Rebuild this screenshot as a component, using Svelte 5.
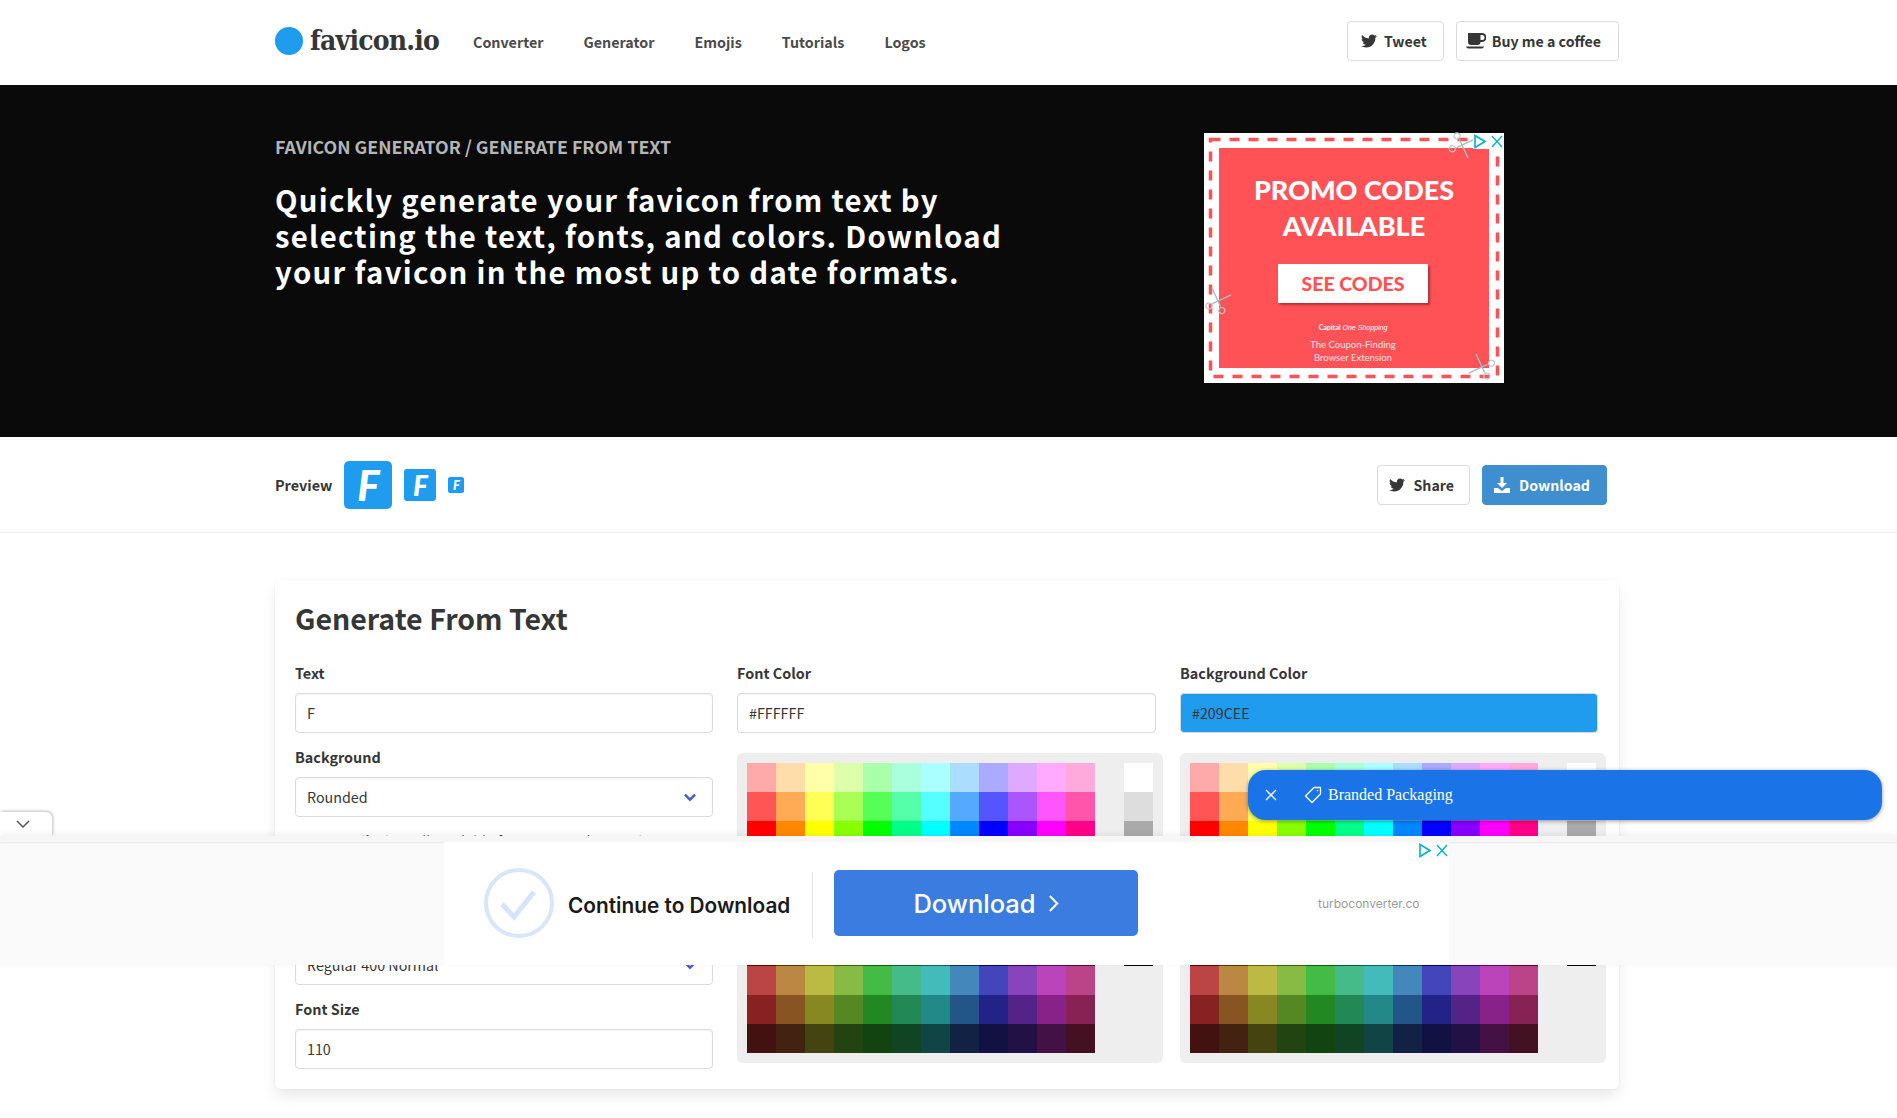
<script>
	const navLinks = ['Converter', 'Generator', 'Emojis', 'Tutorials', 'Logos'];

	const hues = [
		['h', 'l', 'l'], ['h', 'm', 'l'], ['h', 'h', 'l'], ['m', 'h', 'l'],
		['l', 'h', 'l'], ['l', 'h', 'm'], ['l', 'h', 'h'], ['l', 'm', 'h'],
		['l', 'l', 'h'], ['m', 'l', 'h'], ['h', 'l', 'h'], ['h', 'l', 'm']
	];
	const shades = [
		{ h: 'ff', m: 'dd', l: 'aa' },
		{ h: 'ff', m: 'aa', l: '55' },
		{ h: 'ff', m: '88', l: '00' },
		{ h: 'cc', m: '66', l: '00' },
		{ h: 'cc', m: '88', l: '44' },
		{ h: '99', m: '44', l: '00' },
		{ h: '66', m: '33', l: '00' },
		{ h: 'bb', m: '88', l: '44' },
		{ h: '88', m: '55', l: '22' },
		{ h: '44', m: '22', l: '11' }
	];
	const swatches = shades.flatMap((s) =>
		hues.map((c) => '#' + s[c[0]] + s[c[1]] + s[c[2]])
	);
	const grays = ['#ffffff', '#dddddd', '#aaaaaa', '#888888', '#666666', '#333333', '#000000'];
	const pickers = ['font', 'background'];
</script>

{#snippet twitter()}
	<svg class="ico" viewBox="0 0 512 512"><path fill="currentColor" d="M459 152c.3 4.500.3 9.100.3 13.600 0 138.700-105.600 298.600-298.600 298.600-59.500 0-114.700-17.200-161.100-47.100 8.400 1 16.600 1.300 25.300 1.300 49.100 0 94.200-16.600 130.300-44.800-46.100-1-84.800-31.200-98.100-72.800 6.500 1 13 1.600 19.800 1.600 9.400 0 18.800-1.300 27.600-3.600-48.100-9.700-84.100-52-84.100-103v-1.300c14 7.800 30.200 12.700 47.400 13.300-28.300-18.800-46.800-51-46.800-87.400 0-19.500 5.200-37.400 14.300-53 51.700 63.700 129.300 105.300 216.400 109.800-1.600-7.800-2.600-15.900-2.600-24 0-57.800 46.800-104.900 104.900-104.900 30.200 0 57.500 12.700 76.700 33.100 23.700-4.500 46.500-13.300 66.600-25.300-7.800 24-24.400 44.200-46.100 57.200 21.100-2.300 41.600-8.100 60.400-16.200-14.300 20.800-32.200 39.300-52.600 54.300z"/></svg>
{/snippet}

{#snippet adChoice()}
	<svg class="adchoice" viewBox="0 0 30 15">
		<path d="M2 1.500v12l10-6z" fill="none" stroke="#00aecd" stroke-width="1.600"/>
		<path d="M19 2l10 11M29 2L19 13" fill="none" stroke="#00aecd" stroke-width="1.300"/>
	</svg>
{/snippet}

{#snippet scissors(cls)}
	<svg class="scissors {cls}" viewBox="0 0 28 28">
		<path d="M2 2l17 17M26 2L9 19" stroke="#a9b9c4" stroke-width="1.600" fill="none"/>
		<circle cx="6" cy="23" r="3.500" fill="none" stroke="#b9c7d0" stroke-width="1.400"/>
		<circle cx="22" cy="23" r="3.500" fill="none" stroke="#b9c7d0" stroke-width="1.400"/>
	</svg>
{/snippet}

{#snippet field(label, value, fill)}
	<div class="field">
		<span class="label">{label}</span>
		<div class="input" class:filled={fill}>{value}</div>
	</div>
{/snippet}

{#snippet select(label, value)}
	<div class="field">
		<span class="label">{label}</span>
		<div class="input">
			{value}
			<svg class="caret" viewBox="0 0 12 8"><path d="M1.500 1.500L6 6l4.500-4.500" fill="none" stroke="#485fc7" stroke-width="2.200"/></svg>
		</div>
	</div>
{/snippet}

<header class="nav">
	<div class="container nav-row">
		<div class="logo"><span class="dot"></span><span class="wordmark">favicon.io</span></div>
		<nav>
			{#each navLinks as link}
				<span class="nav-link">{link}</span>
			{/each}
		</nav>
		<div class="nav-actions">
			<span class="btn tweet">{@render twitter()}Tweet</span>
			<span class="btn coffee">
				<svg class="ico cup" viewBox="0 0 20 16"><path fill="currentColor" d="M2 0h14a4 4 0 0 1 0 9h-1.500a3 3 0 0 1-3 3H5a3 3 0 0 1-3-3zM14.500 2v5H16a2.500 2.500 0 0 0 0-5zM0 13.500h18c-.5 1.500-1.500 2-3 2H3c-1.500 0-2.500-.5-3-2z"/></svg>
				Buy me a coffee
			</span>
		</div>
	</div>
</header>

<section class="hero">
	<div class="container hero-row">
		<div class="hero-copy">
			<p class="crumb">FAVICON GENERATOR / GENERATE FROM TEXT</p>
			<h1>Quickly generate your favicon from text by selecting the text, fonts, and colors. Download your favicon in the most up to date formats.</h1>
		</div>
		<aside class="promo">
			<svg class="promo-dash" viewBox="0 0 300 250">
				<rect x="6.500" y="6.500" width="287" height="237" fill="none" stroke="#ff5257" stroke-width="3.500" stroke-dasharray="10 9"/>
			</svg>
			<div class="promo-red">
				<div class="promo-title">PROMO CODES<br />AVAILABLE</div>
				<div class="promo-btn">SEE CODES</div>
				<div class="promo-brand"><b>Capital</b><i>One Shopping</i></div>
				<div class="promo-sub">The Coupon-Finding<br />Browser Extension</div>
			</div>
			{@render scissors('s-top')}
			{@render scissors('s-left')}
			{@render scissors('s-bottom')}
			{@render adChoice()}
		</aside>
	</div>
</section>

<section class="preview">
	<div class="container preview-row">
		<span class="preview-label">Preview</span>
		<span class="fav fav-48">F</span>
		<span class="fav fav-32">F</span>
		<span class="fav fav-16">F</span>
		<div class="preview-actions">
			<span class="btn share">{@render twitter()}Share</span>
			<span class="btn primary">
				<svg class="ico" viewBox="0 0 16 16"><path fill="currentColor" d="M6.500 0h3v6H13L8 11 3 6h3.500zM0 11h4l4 3 4-3h4v5H0z"/></svg>
				Download
			</span>
		</div>
	</div>
</section>

<main class="container">
	<div class="card">
		<h2>Generate From Text</h2>
		<div class="columns">
			<div class="col">
				{@render field('Text', 'F')}
				{@render select('Background', 'Rounded')}
				<div class="field">
					<span class="label">Font Family <em>(see all available fonts at Google Fonts)</em></span>
					<div class="input">
						Leckerli One
						<svg class="caret" viewBox="0 0 12 8"><path d="M1.500 1.500L6 6l4.500-4.500" fill="none" stroke="#485fc7" stroke-width="2.200"/></svg>
					</div>
				</div>
				{@render select('Font Variant', 'Regular 400 Normal')}
				{@render field('Font Size', '110')}
			</div>
			{#each pickers as picker}
				<div class="col">
					{#if picker === 'font'}
						{@render field('Font Color', '#FFFFFF')}
					{:else}
						{@render field('Background Color', '#209CEE', true)}
					{/if}
					<div class="picker">
						<div class="swatches">
							{#each swatches as color}
								<span style="background: {color}"></span>
							{/each}
						</div>
						<div class="grays">
							{#each grays as color}
								<span style="background: {color}"></span>
							{/each}
						</div>
					</div>
				</div>
			{/each}
		</div>
	</div>
</main>

<div class="pill">
	<svg class="pill-x" viewBox="0 0 12 12"><path d="M1 1l10 10M11 1L1 11" stroke="#fff" stroke-width="1.300" fill="none"/></svg>
	<svg class="pill-tag" viewBox="0 0 18 18"><path d="M10 1.500h6.500V8L8 16.500 1.500 10z" fill="none" stroke="#fff" stroke-width="1.300" stroke-linejoin="round"/><circle cx="13.500" cy="4.500" r=".8" fill="#fff"/></svg>
	<span>Branded Packaging</span>
</div>

<div class="tab">
	<svg viewBox="0 0 14 9"><path d="M1 1l6 6 6-6" fill="none" stroke="#555" stroke-width="1.500"/></svg>
</div>

<div class="bar">
	<div class="bar-ad">
		<svg class="check" viewBox="0 0 70 70">
			<circle cx="35" cy="35" r="33" fill="#fff" stroke="#d9e6f9" stroke-width="4"/>
			<path d="M18 36l12 13 20-25" fill="none" stroke="#d5e4fa" stroke-width="5"/>
		</svg>
		<span class="continue">Continue to Download</span>
		<span class="divider"></span>
		<span class="dl">Download <svg viewBox="0 0 10 18"><path d="M1.500 2l7 7-7 7" fill="none" stroke="#fff" stroke-width="2"/></svg></span>
		<span class="turbo">turboconverter.co</span>
		{@render adChoice()}
	</div>
</div>

<style>
	:global(body) {
		margin: 0;
		background: #fff;
		color: #363636;
		font-family: 'Noto Sans CJK SC', 'Open Sans', sans-serif;
	}

	.container {
		width: 1344px;
		margin-left: 275px;
		box-sizing: border-box;
	}

	main.container {
		padding-bottom: 29px;
	}

	.nav {
		height: 85px;
	}

	.nav-row {
		display: flex;
		align-items: center;
		height: 100%;
		padding-bottom: 3px;
	}

	.logo {
		display: flex;
		align-items: center;
		gap: 7px;
		width: 198px;
	}

	.dot {
		width: 28px;
		height: 28px;
		border-radius: 50%;
		background: #209cee;
	}

	.wordmark {
		font-family: 'DejaVu Serif Condensed', 'DejaVu Serif', serif;
		font-size: 28px;
		line-height: 36px;
		font-weight: 700;
		letter-spacing: -0.800px;
		color: #363636;
	}

	nav {
		display: flex;
		gap: 40px;
	}

	.nav-link {
		font-size: 14.300px;
		font-weight: 700;
		color: #4a4a4a;
	}

	.nav-actions {
		margin-left: auto;
		display: flex;
		gap: 12px;
	}

	.btn {
		display: inline-flex;
		align-items: center;
		height: 40px;
		box-sizing: border-box;
		border: 1px solid #dbdbdb;
		border-radius: 4px;
		font-size: 14.200px;
		font-weight: 700;
		color: #363636;
		background: #fff;
	}

	.tweet {
		gap: 7px;
		padding: 0 16px 0 13px;
	}

	.share {
		gap: 9px;
		padding: 0 15px 0 11px;
	}

	.coffee {
		gap: 6px;
		padding: 0 17px 0 9px;
	}

	.primary {
		gap: 9px;
		padding: 0 16px 0 11px;
		background: #3e8ed0;
		border-color: #3e8ed0;
		color: #fff;
	}

	.ico {
		width: 16px;
		height: 16px;
	}

	.cup {
		width: 20px;
	}

	.hero {
		height: 352px;
		background: #0a0a0a;
	}

	.hero-row {
		display: flex;
		padding-top: 48px;
	}

	.hero-copy {
		width: 929px;
	}

	.crumb {
		margin: 0;
		font-size: 17.800px;
		line-height: 26px;
		font-weight: 700;
		color: #b5b5b5;
	}

	h1 {
		margin: 22px 0 0;
		width: 760px;
		font-size: 29.300px;
		line-height: 36px;
		font-weight: 700;
		letter-spacing: 1.300px;
		color: #fff;
	}

	.promo {
		position: relative;
		width: 300px;
		height: 250px;
		background: #fff;
		box-sizing: border-box;
		padding: 15px;
	}

	.promo-dash {
		position: absolute;
		inset: 0;
		width: 300px;
		height: 250px;
	}

	.promo-red {
		position: relative;
		height: 100%;
		background: #ff5257;
		color: #fff;
		display: flex;
		flex-direction: column;
		align-items: center;
		font-family: 'Lato', sans-serif;
	}

	.promo-title {
		margin: 24px 0 0;
		font-size: 27px;
		line-height: 36px;
		font-weight: 900;
		text-align: center;
	}

	.promo-btn {
		width: 150px;
		height: 39px;
		margin-top: 20px;
		margin-right: 2px;
		background: #fff;
		color: #ff5257;
		font-size: 19.500px;
		font-weight: 900;
		line-height: 39px;
		text-align: center;
		box-shadow: 2px 2px 2px rgba(120, 30, 40, 0.6);
	}

	.promo-brand {
		margin-top: 19px;
		font-size: 7px;
		line-height: 10px;
		margin-right: 2px;
	}

	.promo-brand i {
		font-family: 'Liberation Sans', sans-serif;
		margin-left: 2px;
	}

	.promo-sub {
		margin-top: 5px;
		margin-right: 2px;
		font-size: 9.500px;
		line-height: 13px;
		text-align: center;
		color: #ffe4e4;
	}

	.scissors {
		position: absolute;
		width: 24px;
		height: 24px;
	}

	.s-top {
		top: 0;
		left: 246px;
		transform: rotate(110deg);
	}

	.s-left {
		top: 156px;
		left: 2px;
		transform: rotate(20deg);
	}

	.s-bottom {
		top: 222px;
		left: 266px;
		transform: rotate(-70deg);
	}

	.adchoice {
		position: absolute;
		top: 1px;
		right: 1px;
		width: 30px;
		height: 15px;
		background: #fff;
	}

	.preview {
		height: 96px;
		border-bottom: 1px solid #ededed;
		box-sizing: border-box;
	}

	.preview-row {
		display: flex;
		align-items: center;
		height: 100%;
	}

	.preview-label {
		font-size: 14.400px;
		font-weight: 700;
		margin-right: 12px;
	}

	.fav {
		display: flex;
		align-items: center;
		justify-content: center;
		background: #209cee;
		color: #fff;
		font-family: 'Lato', sans-serif;
		font-style: italic;
		font-weight: 900;
	}

	.fav-48 {
		width: 48px;
		height: 48px;
		border-radius: 5px;
		font-size: 42px;
		margin-right: 12px;
	}

	.fav-32 {
		width: 32px;
		height: 32px;
		border-radius: 3px;
		font-size: 28px;
		margin-right: 12px;
	}

	.fav-16 {
		width: 16px;
		height: 16px;
		border-radius: 2px;
		font-size: 13px;
	}

	.preview-actions {
		margin-left: auto;
		margin-right: 12px;
		display: flex;
		gap: 12px;
	}

	.card {
		margin-top: 47px;
		height: 509px;
		box-sizing: border-box;
		padding: 20px;
		border-radius: 6px;
		box-shadow: 0 8px 16px -2px rgba(10, 10, 10, 0.1), 0 0 0 1px rgba(10, 10, 10, 0.02);
		background: #fff;
	}

	h2 {
		margin: 0;
		font-size: 28.500px;
		line-height: 36px;
		font-weight: 600;
		color: #363636;
	}

	.columns {
		display: grid;
		grid-template-columns: 418px 419px 418px;
		gap: 24px;
		margin-top: 26px;
	}

	.field {
		margin-bottom: 13px;
	}

	.label {
		display: block;
		height: 31px;
		font-size: 14.400px;
		line-height: 22px;
		font-weight: 700;
		color: #363636;
	}

	.label em {
		font-style: normal;
		font-weight: 400;
		margin-left: 2px;
	}

	.input {
		position: relative;
		height: 40px;
		box-sizing: border-box;
		padding: 0 11px;
		border: 1px solid #dbdbdb;
		border-radius: 4px;
		font-size: 14.300px;
		line-height: 38px;
		color: #363636;
		box-shadow: inset 0 1px 2px rgba(10, 10, 10, 0.05);
	}

	.filled {
		background: #209cee;
		border-color: #dbdbdb;
	}

	.caret {
		position: absolute;
		right: 15px;
		top: 15px;
		width: 14px;
		height: 9px;
	}

	.picker {
		display: flex;
		justify-content: space-between;
		box-sizing: border-box;
		height: 310px;
		width: 426px;
		padding: 10px;
		margin-top: 20px;
		border-radius: 6px;
		background: #eee;
	}

	.swatches {
		display: grid;
		grid-template-columns: repeat(12, 29px);
		grid-auto-rows: 29px;
	}

	.grays {
		display: grid;
		grid-template-columns: 29px;
		grid-auto-rows: 29px;
		width: 29px;
	}

	.swatches span,
	.grays span {
		display: block;
	}

	.pill {
		position: absolute;
		left: 1248px;
		top: 770px;
		width: 634px;
		height: 50px;
		box-sizing: border-box;
		padding-left: 17px;
		display: flex;
		align-items: center;
		border-radius: 18px;
		background: #1b73e8;
		box-shadow: 0 1px 4px rgba(0, 0, 0, 0.4);
		color: #fff;
		font-family: 'Liberation Serif', serif;
		font-size: 16px;
	}

	.pill-x {
		width: 12px;
		height: 12px;
		margin-right: 27px;
	}

	.pill-tag {
		width: 18px;
		height: 18px;
		margin-right: 6px;
	}

	.tab {
		position: absolute;
		left: 0;
		top: 812px;
		width: 52px;
		height: 24px;
		background: #fff;
		border-top-right-radius: 6px;
		box-shadow: 1px -1px 3px rgba(0, 0, 0, 0.25);
		display: flex;
		align-items: center;
		padding-left: 16px;
		box-sizing: border-box;
	}

	.tab svg {
		width: 14px;
		height: 9px;
	}

	.bar {
		position: absolute;
		left: 0;
		right: 0;
		top: 836px;
		height: 129px;
		box-sizing: border-box;
		padding: 6px 0 0 444px;
		background: #fafafa;
		box-shadow: 0 -2px 6px rgba(0, 0, 0, 0.06);
	}

	.bar::before {
		content: '';
		position: absolute;
		left: 0;
		right: 0;
		top: 0;
		height: 6px;
		background: #f6f6f6;
		box-shadow: 0 1px 2px rgba(0, 0, 0, 0.07);
	}

	.bar-ad {
		position: relative;
		width: 1005px;
		height: 123px;
		background: #fff;
	}

	.check {
		position: absolute;
		left: 40px;
		top: 26px;
		width: 70px;
		height: 70px;
	}

	.continue {
		position: absolute;
		left: 124px;
		top: 50px;
		font-family: 'Inter', sans-serif;
		font-size: 20.800px;
		line-height: 28px;
		font-weight: 600;
		color: #1a1a1a;
	}

	.divider {
		position: absolute;
		left: 368px;
		top: 30px;
		width: 1px;
		height: 66px;
		background: #e6e6e6;
	}

	.dl {
		position: absolute;
		left: 390px;
		top: 28px;
		width: 304px;
		height: 66px;
		border-radius: 5px;
		background: #3b7ce0;
		color: #fff;
		display: flex;
		align-items: center;
		justify-content: center;
		gap: 12px;
		font-family: 'Inter', sans-serif;
		font-size: 25.500px;
		font-weight: 500;
	}

	.dl svg {
		width: 11px;
		height: 19px;
	}

	.turbo {
		position: absolute;
		left: 874px;
		top: 54px;
		font-family: 'Inter', sans-serif;
		font-size: 12px;
		line-height: 16px;
		color: #9a9a9a;
	}
</style>
